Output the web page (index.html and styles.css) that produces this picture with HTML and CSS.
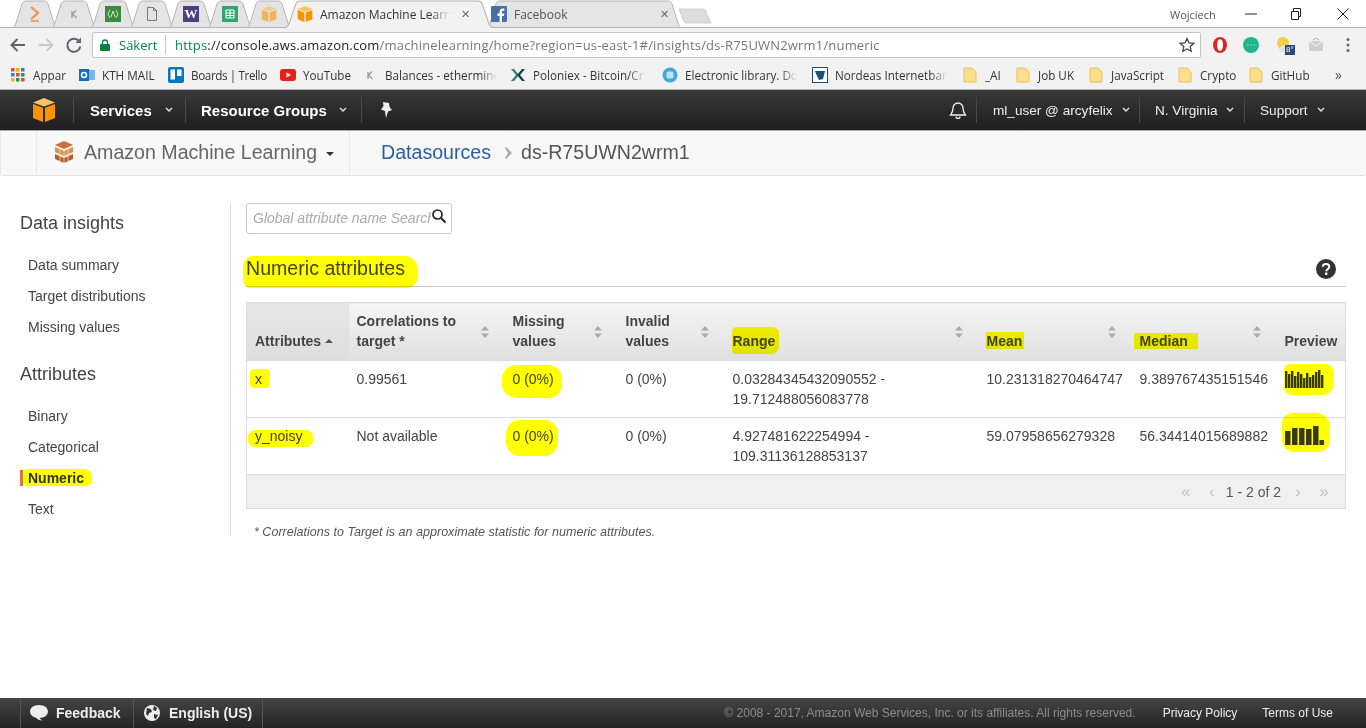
FILE: index.html
```html
<!DOCTYPE html>
<html lang="en">
<head>
<meta charset="utf-8">
<title>Amazon Machine Learning</title>
<link rel="stylesheet" href="styles.css">
</head>
<body>
<svg class="defs" width="0" height="0" aria-hidden="true">
  <symbol id="tabshape" viewBox="0 0 50 28" preserveAspectRatio="none">
    <path d="M0 28.5 C4 28 5 26 6 23 L12 4 C13 2 14 1 16 1 L34 1 C36 1 37 2 38 4 L44 23 C45 26 46 28 50 28.5Z"/>
  </symbol>
  <symbol id="wide" viewBox="0 0 200 28" preserveAspectRatio="none">
    <path d="M0 28.5 C4 28 5 26 6 23 L12 4 C13 2 14 1 16 1 L184 1 C186 1 187 2 188 4 L194 23 C195 26 196 28 200 28.5Z"/>
  </symbol>
  <symbol id="folder" viewBox="0 0 16 16"><path d="M2 1h8l4 4v10H2z" fill="#fbdf8c" stroke="#e8c25c"/></symbol>
  <symbol id="sort" viewBox="0 0 8 12"><path d="M4 0l4 4.500H0zM4 12L0 7.500h8z" fill="#aaa"/></symbol>
  <symbol id="cube" viewBox="0 0 22 24"><path d="M11 0L22 4.500 11 8.500 0 4.500z" fill="#fbc35f"/><path d="M0 6l10 3.700V24L0 20z" fill="#f79400"/><path d="M22 6L12 9.700V24l10-4z" fill="#f79400"/></symbol>
  <symbol id="chev" viewBox="0 0 8 6"><path d="M1 1l3 3 3-3" fill="none" stroke="#ddd" stroke-width="1.500"/></symbol>
</svg>

<div class="page">
  <header class="browser">
    <div class="tabstrip">
      <div class="tab pinned"><svg class="shape"><use href="#tabshape"/></svg><svg class="fav" viewBox="0 0 16 16"><path d="M4 1l7 6-7 6" fill="none" stroke="#f0914a" stroke-width="2"/><path d="M4 15h8" stroke="#f0914a" stroke-width="1.500"/></svg></div>
      <div class="tab pinned"><svg class="shape"><use href="#tabshape"/></svg><svg class="fav" viewBox="0 0 16 16"><path d="M6 5v7M6 8.500l4-4M7 8.500l3.500 3.500" fill="none" stroke="#999" stroke-width="1.300"/></svg></div>
      <div class="tab pinned"><svg class="shape"><use href="#tabshape"/></svg><svg class="fav" viewBox="0 0 16 16"><rect width="16" height="16" fill="#3c8a3e"/><path d="M5 4l-2 4 2 4M11 4l2 4-2 4M6 11l2-6 2 6" fill="none" stroke="#cfe8cf"/></svg></div>
      <div class="tab pinned"><svg class="shape"><use href="#tabshape"/></svg><svg class="fav" viewBox="0 0 16 16"><path d="M3.500 1.500h6l3 3v10h-9zM9.500 1.500v3h3" fill="none" stroke="#777"/></svg></div>
      <div class="tab pinned"><svg class="shape"><use href="#tabshape"/></svg><span class="fav w-fav">W</span></div>
      <div class="tab pinned"><svg class="shape"><use href="#tabshape"/></svg><svg class="fav" viewBox="0 0 16 16"><rect width="16" height="16" rx="1" fill="#2fa56f"/><path d="M4 4h8v8H4zM4 7h8M4 9.500h8M8 4v8" fill="none" stroke="#fff"/></svg></div>
      <div class="tab pinned"><svg class="shape"><use href="#tabshape"/></svg><svg class="fav faded"><use href="#cube"/></svg></div>
      <div class="tab active"><svg class="shape"><use href="#wide"/></svg><svg class="fav"><use href="#cube"/></svg><span class="tab-title">Amazon Machine Learning</span><span class="tab-x">✕</span></div>
      <div class="tab other"><svg class="shape"><use href="#wide"/></svg><svg class="fav" viewBox="0 0 16 16"><rect width="16" height="16" rx="1" fill="#4a6ea9"/><path d="M11 16V10h2l.3-2.400H11V6c0-.8.3-1.200 1.300-1.200h1.100V2.700C13 2.600 12.300 2.600 11.700 2.600 9.800 2.600 8.600 3.700 8.600 5.800v1.800H6.500V10h2.100v6z" fill="#fff"/></svg><span class="tab-title">Facebook</span><span class="tab-x">✕</span></div>
      <svg class="newtab" viewBox="0 0 34 16"><path d="M1 1h24a2 2 0 0 1 2 1l6 13H8a2 2 0 0 1-2-1z" fill="#dcdcdc" stroke="#cfcfcf"/></svg>
      <div class="winctl">
        <span class="win-user">Wojciech</span>
        <svg class="win-ico" viewBox="0 0 12 12"><path d="M0 6h12" stroke="#222"/></svg>
        <svg class="win-ico" viewBox="0 0 12 12"><path d="M1.500 3.500h7v8h-7zM3.500 3.500v-3h7v8h-2" fill="none" stroke="#222"/></svg>
        <svg class="win-ico" viewBox="0 0 12 12"><path d="M.5.500l11 11M11.500.500l-11 11" stroke="#222"/></svg>
      </div>
    </div>

    <div class="toolbar">
      <svg class="tb-btn" viewBox="0 0 28 28"><path d="M21 14H8M13.500 8l-6 6 6 6" fill="none" stroke="#5f6368" stroke-width="2"/></svg>
      <svg class="tb-btn" viewBox="0 0 28 28"><path d="M7 14h13M14.500 8l6 6-6 6" fill="none" stroke="#c8c8c8" stroke-width="2"/></svg>
      <svg class="tb-btn" viewBox="0 0 28 28"><path d="M19.500 11a6.500 6.500 0 1 0 .8 4.500" fill="none" stroke="#5f6368" stroke-width="2"/><path d="M21 6.500V12h-5.500z" fill="#5f6368"/></svg>
      <div class="omnibox">
        <svg class="lock" viewBox="0 0 10 12"><path d="M2.500 5V3.500a2.500 2.500 0 0 1 5 0V5" fill="none" stroke="#0b8043" stroke-width="1.300"/><rect y="5" width="10" height="7" rx="1" fill="#0b8043"/></svg>
        <span class="secure">Säkert</span>
        <span class="url"><span class="scheme">https</span><span class="host">://console.aws.amazon.com</span>/machinelearning/home?region=us-east-1#/insights/ds-R75UWN2wrm1/numeric</span>
        <svg class="star" viewBox="0 0 16 16"><path d="M8 1.500l2 4.400 4.800.5-3.600 3.200 1 4.700L8 11.900l-4.200 2.400 1-4.700L1.200 6.400 6 5.900z" fill="none" stroke="#444" stroke-width="1.300"/></svg>
      </div>
      <div class="exts">
        <svg class="ext" viewBox="0 0 18 18"><ellipse cx="9" cy="9" rx="7" ry="8" fill="#e0232a"/><ellipse cx="9" cy="9" rx="3" ry="6" fill="#fff"/></svg>
        <svg class="ext" viewBox="0 0 18 18"><circle cx="9" cy="9" r="8" fill="#20b58e"/><path d="M5.500 9h1M8.500 9h1M11.500 9h1" stroke="#fff" stroke-width="1.200"/></svg>
        <span class="ext weather"><svg viewBox="0 0 18 18"><circle cx="8" cy="7" r="6" fill="#f7cd4a"/><ellipse cx="11" cy="13" rx="7" ry="4" fill="#dfe5ec"/></svg><span class="badge">8°</span></span>
        <svg class="ext" viewBox="0 0 18 18"><path d="M2 5h14v10H2z" fill="#cfcfcf"/><path d="M2 5l7 5 7-5" fill="none" stroke="#fff"/><path d="M6 4l3-2 3 2" fill="none" stroke="#aaa"/></svg>
        <svg class="ext" viewBox="0 0 18 18"><circle cx="9" cy="3.500" r="1.500" fill="#666"/><circle cx="9" cy="9" r="1.500" fill="#666"/><circle cx="9" cy="14.500" r="1.500" fill="#666"/></svg>
      </div>
    </div>

    <nav class="bookmarks">
      <a class="bm"><svg class="bm-ico" viewBox="0 0 16 16"><g><rect x="1" y="1" width="3.500" height="3.500" fill="#e8453c"/><rect x="6" y="1" width="3.500" height="3.500" fill="#f4b400"/><rect x="11" y="1" width="3.500" height="3.500" fill="#3b78e7"/><rect x="1" y="6" width="3.500" height="3.500" fill="#3b78e7"/><rect x="6" y="6" width="3.500" height="3.500" fill="#e8453c"/><rect x="11" y="6" width="3.500" height="3.500" fill="#0f9d58"/><rect x="1" y="11" width="3.500" height="3.500" fill="#f4b400"/><rect x="6" y="11" width="3.500" height="3.500" fill="#0f9d58"/><rect x="11" y="11" width="3.500" height="3.500" fill="#e8453c"/></g></svg><span>Appar</span></a>
      <a class="bm"><svg class="bm-ico" viewBox="0 0 16 16"><rect x="6" y="3" width="10" height="10" fill="#7cb4e4"/><rect y="2" width="10" height="12" fill="#0f6fc6"/><circle cx="5" cy="8" r="2.500" fill="none" stroke="#fff" stroke-width="1.500"/></svg><span>KTH MAIL</span></a>
      <a class="bm"><svg class="bm-ico" viewBox="0 0 16 16"><rect width="16" height="16" rx="2" fill="#0079bf"/><rect x="2.500" y="2.500" width="4.500" height="10" fill="#fff"/><rect x="9" y="2.500" width="4.500" height="6.500" fill="#fff"/></svg><span class="tight">Boards | Trello</span></a>
      <a class="bm"><svg class="bm-ico" viewBox="0 0 16 16"><rect y="2" width="16" height="12" rx="3" fill="#e62117"/><path d="M6.500 5.500L11 8l-4.500 2.500z" fill="#fff"/></svg><span>YouTube</span></a>
      <a class="bm"><svg class="bm-ico" viewBox="0 0 16 16"><path d="M6 5v7M6 8.500l4-4M7 8.500l3.500 3.500" fill="none" stroke="#999" stroke-width="1.300"/></svg><span class="fade">Balances - ethermine</span></a>
      <a class="bm"><svg class="bm-ico" viewBox="0 0 16 16"><path d="M1 2l5 6-5 6h3l5-6-5-6z" fill="#2f7d7f"/><path d="M15 2l-5 6 5 6h-3L7 8l5-6z" fill="#1b3c4a"/></svg><span class="fade">Poloniex - Bitcoin/Crypto</span></a>
      <a class="bm"><svg class="bm-ico" viewBox="0 0 16 16"><circle cx="8" cy="8" r="7.500" fill="#3fa9e0"/><rect x="4.500" y="4.500" width="7" height="7" rx="2" fill="#bfe6f7"/></svg><span class="fade">Electronic library. Download</span></a>
      <a class="bm"><svg class="bm-ico" viewBox="0 0 16 16"><rect x=".5" y=".5" width="15" height="15" fill="#fff" stroke="#1d4f7c"/><path d="M3 4h10l-2 8-4 1-2-4z" fill="#1d4f7c"/></svg><span class="fade">Nordeas Internetbank</span></a>
      <a class="bm"><svg class="bm-ico"><use href="#folder"/></svg><span>_AI</span></a>
      <a class="bm"><svg class="bm-ico"><use href="#folder"/></svg><span>Job UK</span></a>
      <a class="bm"><svg class="bm-ico"><use href="#folder"/></svg><span>JavaScript</span></a>
      <a class="bm"><svg class="bm-ico"><use href="#folder"/></svg><span>Crypto</span></a>
      <a class="bm"><svg class="bm-ico"><use href="#folder"/></svg><span>GitHub</span></a>
      <a class="bm more">»</a>
    </nav>
  </header>

  <nav class="awsnav">
    <div class="nav-cell logo-cell"><svg class="aws-cube"><use href="#cube"/></svg></div>
    <div class="nav-cell services-cell"><b>Services</b><svg class="chev"><use href="#chev"/></svg></div>
    <div class="nav-cell groups-cell"><b>Resource Groups</b><svg class="chev"><use href="#chev"/></svg></div>
    <div class="nav-cell pin-cell"><svg class="pin" viewBox="0 0 12 16"><path d="M3 0l6 1 .5 4 2.500 3-4 1.500L6 16 5 9 1 7.500 3.500 4z" fill="#eee"/></svg></div>
    <div class="nav-right">
      <div class="nav-cell bell-cell"><svg class="bell" viewBox="0 0 18 18"><path d="M9 2a5 5 0 0 0-5 5c0 4-1.500 5.500-2.500 7h15C15.500 12.500 14 11 14 7a5 5 0 0 0-5-5zM7 15.500a2 2 0 0 0 4 0" fill="none" stroke="#eee" stroke-width="1.300"/></svg></div>
      <div class="nav-cell user-cell"><span>ml_user @ arcyfelix</span><svg class="chev"><use href="#chev"/></svg></div>
      <div class="nav-cell region-cell"><span>N. Virginia</span><svg class="chev"><use href="#chev"/></svg></div>
      <div class="nav-cell support-cell"><span>Support</span><svg class="chev"><use href="#chev"/></svg></div>
    </div>
  </nav>

  <div class="subnav">
    <div class="sub-gap"></div>
    <div class="sub-service">
      <svg class="ml-ico" viewBox="0 0 20 22"><path d="M10 0l9 4-9 4-9-4z" fill="#c96f3b"/><path d="M1 6l9 4 9-4v5l-9 4-9-4z" fill="#e08b4f"/><path d="M1 13l9 4 9-4v5l-9 4-9-4z" fill="#b85d2c"/><path d="M6 8v12M10 10v12M14 8v12" stroke="#f5d9bf" stroke-width=".8"/></svg>
      <span>Amazon Machine Learning</span><i class="caret"></i>
    </div>
    <div class="crumbs"><a>Datasources</a><svg class="crumb-sep" viewBox="0 0 8 12"><path d="M1 0l6 6-6 6-1-1 3-5-3-5z" fill="#aaa"/></svg><span>ds-R75UWN2wrm1</span></div>
  </div>

  <main class="main">
    <aside class="side">
      <h3>Data insights</h3>
      <ul>
        <li>Data summary</li>
        <li>Target distributions</li>
        <li>Missing values</li>
      </ul>
      <h3 class="second">Attributes</h3>
      <ul>
        <li>Binary</li>
        <li>Categorical</li>
        <li class="current"><b class="hl hl-nav">Numeric</b></li>
        <li>Text</li>
      </ul>
    </aside>

    <section class="content">
      <div class="search">
        <span class="placeholder">Global attribute name Search</span>
        <svg class="mag" viewBox="0 0 14 14"><circle cx="5.500" cy="5.500" r="4.500" fill="none" stroke="#222" stroke-width="1.700"/><path d="M9 9l4.500 4.500" stroke="#222" stroke-width="2"/></svg>
      </div>
      <div class="section-head">
        <h2><span class="hl hl-title">Numeric attributes</span></h2>
        <svg class="help" viewBox="0 0 20 20"><circle cx="10" cy="10" r="10" fill="#333"/><path d="M6.800 7.800C6.800 5.900 8.200 5 10 5c1.900 0 3.300 1 3.300 2.700 0 2.500-3 2.300-3 4.500" fill="none" stroke="#fff" stroke-width="2"/><rect x="9" y="13.500" width="2.400" height="2.400" fill="#fff"/></svg>
      </div>

      <table class="grid">
        <colgroup>
          <col class="c1"><col class="c2"><col class="c3"><col class="c4"><col class="c5"><col class="c6"><col class="c7"><col class="c8">
        </colgroup>
        <thead>
          <tr>
            <th class="sorted"><div class="th-in"><span class="th-label nowrap">Attributes <i class="up"></i></span></div></th>
            <th><div class="th-in"><span class="th-label">Correlations to target *</span><svg class="sort"><use href="#sort"/></svg></div></th>
            <th><div class="th-in"><span class="th-label">Missing values</span><svg class="sort"><use href="#sort"/></svg></div></th>
            <th><div class="th-in"><span class="th-label">Invalid values</span><svg class="sort"><use href="#sort"/></svg></div></th>
            <th><div class="th-in"><span class="th-label"><span class="hl hl-range">Range</span></span><svg class="sort"><use href="#sort"/></svg></div></th>
            <th><div class="th-in"><span class="th-label"><span class="hl hl-mean">Mean</span></span><svg class="sort"><use href="#sort"/></svg></div></th>
            <th><div class="th-in"><span class="th-label"><span class="hl hl-median">Median</span></span><svg class="sort"><use href="#sort"/></svg></div></th>
            <th><div class="th-in"><span class="th-label">Preview</span></div></th>
          </tr>
        </thead>
        <tbody>
          <tr>
            <td><span class="hl hl-x">x</span></td>
            <td>0.99561</td>
            <td><span class="hl hl-miss1">0 (0%)</span></td>
            <td>0 (0%)</td>
            <td>0.03284345432090552 - 19.712488056083778</td>
            <td>10.231318270464747</td>
            <td>9.389767435151546</td>
            <td><span class="hl hl-prev1"><svg class="spark" viewBox="0 0 39 19"><path fill="#3a3a3a" d="M0 2h2.400v17H0zM3 5h2.400v14H3zM6 2h2.400v17H6zM9 7h2.400v12H9zM12 3h2.400v16H12zM15 5h2.400v14H15zM18 9h2.400v10H18zM21 4h2.400v15H21zM24 8h2.400v11H24zM27 6h2.400v13H27zM30 3h2.400v16H30zM33 1h2.400v18H33zM36 6h2.400v13H36z"/></svg></span></td>
          </tr>
          <tr>
            <td><span class="hl hl-y">y_noisy</span></td>
            <td>Not available</td>
            <td><span class="hl hl-miss2">0 (0%)</span></td>
            <td>0 (0%)</td>
            <td>4.927481622254994 - 109.31136128853137</td>
            <td>59.07958656279328</td>
            <td>56.34414015689882</td>
            <td><span class="hl hl-prev2"><svg class="spark" viewBox="0 0 39 19"><path fill="#3a3a3a" d="M0 5h5.500v14H0zM7 2h5.500v17H7zM14 2h5.500v17H14zM21 3h5.500v16H21zM28 0h5.500v19H28zM34.500 14H39v5h-4.500z"/></svg></span></td>
          </tr>
        </tbody>
        <tfoot>
          <tr>
            <td colspan="8">
              <div class="pager"><span class="pg">«</span><span class="pg">‹</span><span class="pg-text">1 - 2 of 2</span><span class="pg">›</span><span class="pg">»</span></div>
            </td>
          </tr>
        </tfoot>
      </table>
      <p class="note">* Correlations to Target is an approximate statistic for numeric attributes.</p>
    </section>
  </main>

  <footer class="foot">
    <div class="foot-cell feedback"><svg class="foot-ico" viewBox="0 0 18 16"><path d="M9 0c5 0 9 2.800 9 6.500S14 13 9.500 13c1 1 2 2 3 2.500-2.500 0-5-1-6.500-2.800C3 12 0 9.800 0 6.500 0 2.800 4 0 9 0z" fill="#eee"/></svg><b>Feedback</b></div>
    <div class="foot-cell lang"><svg class="foot-ico" viewBox="0 0 16 16"><circle cx="8" cy="8" r="8" fill="#eee"/><path d="M3 3l4 1 1 3-3 1-1 3-2-2zM10 1l3 2-1 3-3-1zM10 9l4 1-2 4-2-1z" fill="#333"/></svg><b>English (US)</b></div>
    <div class="foot-right">
      <span class="copy">© 2008 - 2017, Amazon Web Services, Inc. or its affiliates. All rights reserved.</span>
      <a class="flink privacy">Privacy Policy</a>
      <a class="flink">Terms of Use</a>
    </div>
  </footer>
</div>
</body>
</html>
```

FILE: styles.css
```css
* { box-sizing: border-box; }
html, body { margin: 0; padding: 0; }
body { font-family: "Liberation Sans", Arial, sans-serif; font-size: 14px; color: #444; background: #fff; overflow: hidden; }
.defs { position: absolute; }
.page { width: 1366px; height: 728px; display: flex; flex-direction: column; overflow: hidden; }

/* browser chrome */
.browser { height: 90px; flex: none; font-family: "Open Sans", "Noto Sans", sans-serif; color: #333; }
.tabstrip { height: 28px; display: flex; padding-left: 10px; background: #fff; position: relative; }
.tabstrip::after { content: ""; position: absolute; left: 0; right: 0; bottom: 0; height: 1px; background: #b4b4b4; }
.tab { height: 28px; position: relative; display: flex; align-items: center; flex: none; }
.tab .shape { position: absolute; inset: 0; width: 100%; height: 100%; fill: #e4e4e4; stroke: #b4b4b4; }
.tab.pinned { width: 50px; margin-right: -11px; justify-content: center; }
.tab.active { width: 212px; margin-right: -11px; padding-left: 14px; z-index: 2; }
.tab.active .shape { fill: #f2f2f2; }
.tab.other { width: 200px; padding-left: 7px; }
.fav { width: 16px; height: 16px; position: relative; flex: none; }
.faded { opacity: .6; }
.w-fav { background: #4e4080; color: #fff; font: bold 13px/16px "Liberation Serif", serif; text-align: center; }
.tab-title { position: relative; font-size: 12px; margin-left: 7px; width: 130px; white-space: nowrap; overflow: hidden; -webkit-mask-image: linear-gradient(90deg, #000 85%, transparent); mask-image: linear-gradient(90deg, #000 85%, transparent); color: #333; }
.tab.other .tab-title { width: 137px; color: #555; }
.tab-x { position: relative; font-size: 11px; color: #666; margin-left: 11px; font-family: "DejaVu Sans", sans-serif; }
.tab.other .tab-x { margin-left: 9px; }
.newtab { width: 34px; height: 16px; margin: 8px 0 0 -6px; flex: none; position: relative; }
.winctl { margin-left: auto; display: grid; grid-template-columns: 75px 45px 47px 29px; align-items: center; height: 28px; }
.win-user { font-size: 11px; color: #555; white-space: nowrap; }
.win-ico { width: 12px; height: 12px; }

.toolbar { height: 34px; background: #f2f2f2; display: flex; align-items: center; padding-left: 4px; }
.tb-btn { width: 28px; height: 28px; flex: none; }
.omnibox { width: 1109px; height: 26px; margin-left: 4px; background: #fff; border: 1px solid #c4c4c4; border-radius: 2px; display: flex; align-items: center; padding-left: 7px; font-size: 13px; flex: none; }
.lock { width: 10px; height: 12px; flex: none; }
.secure { color: #0b8043; margin-left: 9px; padding-right: 7px; border-right: 1px solid #c8c8c8; line-height: 20px; width: 47px; white-space: nowrap; }
.url { margin-left: 9px; color: #777; white-space: nowrap; letter-spacing: .18px; flex: 1; }
.scheme { color: #0b8043; }
.host { color: #222; }
.star { width: 16px; height: 16px; margin-right: 5px; flex: none; }
.exts { display: grid; grid-template-columns: 31px 33px 32px 32px 32px; margin-left: 10px; align-items: center; }
.ext { width: 18px; height: 18px; display: block; position: relative; }
.weather svg { width: 18px; height: 18px; }
.badge { position: absolute; left: 10px; top: 9px; background: #2c4a7c; color: #fff; font: 8px/10px "Liberation Sans", sans-serif; padding: 0 1px; }

.bookmarks { height: 28px; background: #f2f2f2; border-bottom: 1px solid #b0b0b0; padding: 0 0 2px 10px; display: grid; grid-template-columns: 69px 89px 112px 82px 148px 152px 150px 150px 53px 73px 89px 71px 87px 20px; align-items: center; font-size: 11.7px; color: #333; }
.bm { display: flex; align-items: center; gap: 7px; min-width: 0; white-space: nowrap; }
.bm-ico { width: 16px; height: 16px; flex: none; }
.tight { letter-spacing: -.4px; }
.fade { width: 112px; overflow: hidden; -webkit-mask-image: linear-gradient(90deg, #000 85%, transparent); mask-image: linear-gradient(90deg, #000 85%, transparent); }
.more { font-size: 14px; color: #555; }

/* aws nav */
.awsnav { height: 41px; flex: none; display: flex; background: linear-gradient(#383838, #1f1f1f); color: #eee; border-bottom: 1px solid #aaa; font-size: 13.6px; }
.nav-cell { height: 40px; display: flex; align-items: center; position: relative; }
.nav-cell::after { content: ""; position: absolute; right: 0; top: 7px; bottom: 7px; width: 1px; background: #4a4a4a; }
.nav-cell b { font-size: 15px; color: #fff; }
.logo-cell { width: 74px; padding-left: 33px; }
.aws-cube { width: 22px; height: 24px; }
.services-cell { width: 112px; padding-left: 16px; }
.services-cell .chev { margin-left: 13px; }
.groups-cell { width: 176px; padding-left: 15px; }
.groups-cell .chev { margin-left: 12px; }
.pin-cell { padding-left: 18px; }
.pin-cell::after, .support-cell::after { display: none; }
.pin { width: 12px; height: 16px; }
.chev { width: 8px; height: 6px; margin-left: 9px; flex: none; }
.nav-right { margin-left: auto; display: flex; padding-right: 36px; }
.bell-cell { width: 37px; padding-left: 9px; }
.bell { width: 18px; height: 18px; }
.user-cell { width: 163px; padding-left: 16px; }
.region-cell { width: 105px; padding-left: 15px; }
.support-cell { width: 85px; padding-left: 15px; }

/* service bar */
.subnav { height: 45px; flex: none; display: flex; background: #f8f8f8; border-bottom: 1px solid #e4e4e4; border-radius: 3px; font-size: 19.6px; }
.sub-gap { width: 37px; border-right: 1px solid #e8e8e8; border-left: 1px solid #e8e8e8; }
.sub-service { width: 313px; display: flex; align-items: center; padding: 0 0 2px 17px; color: #666; border-right: 1px solid #e8e8e8; }
.ml-ico { width: 20px; height: 22px; margin-right: 10px; flex: none; }
.caret { width: 0; height: 0; border: 4px solid transparent; border-top-color: #333; border-bottom: 0; margin-left: 9px; margin-top: 3px; }
.crumbs { display: flex; align-items: center; padding: 0 0 2px 31px; color: #555; }
.crumbs a { color: #2b5ea7; }
.crumb-sep { width: 8px; height: 12px; margin: 2px 8px 0 14px; }

/* main */
.main { flex: 1; display: flex; align-items: flex-start; padding-top: 27px; min-height: 0; }
.side { width: 231px; height: 333px; flex: none; border-right: 1px solid #ddd; padding: 10px 0 0 20px; }
.side h3 { margin: 0 0 17px; font-size: 18px; font-weight: normal; line-height: 20px; color: #444; }
.side h3.second { margin-top: 21px; }
.side ul { list-style: none; margin: 0; padding: 0; }
.side li { height: 31px; line-height: 31px; padding-left: 8px; position: relative; }
.side li.current::before { content: ""; position: absolute; left: 0; top: 7px; width: 3px; height: 16px; background: #e8732c; }
.side li.current b { color: #333; }

.content { width: 1100px; margin-left: 15px; flex: none; }
.search { width: 206px; height: 31px; border: 1px solid #ccc; border-radius: 3px; display: flex; align-items: center; padding: 0 0 2px 6px; background: #fff; }
.placeholder { width: 178px; font-style: italic; color: #aaa; white-space: nowrap; overflow: hidden; flex: none; }
.mag { width: 14px; height: 14px; margin-left: 1px; margin-top: -3px; flex: none; }
.section-head { margin-top: 22px; height: 31px; border-bottom: 1px solid #ccc; display: flex; justify-content: space-between; padding-bottom: 6px; }
.section-head h2 { margin: 0; font-size: 19.6px; font-weight: normal; line-height: 24px; color: #444; }
.help { width: 20px; height: 20px; margin: 3px 10px 0 0; }

.grid { width: 1099px; margin-top: 15px; border-collapse: collapse; table-layout: fixed; border: 1px solid #ddd; }
.c1 { width: 102px; } .c2 { width: 156px; } .c3 { width: 113px; } .c4 { width: 107px; }
.c5 { width: 254px; } .c6 { width: 153px; } .c7 { width: 145px; } .c8 { width: 69px; }
.grid th { padding: 0; background: linear-gradient(#f5f5f5, #dfdfdf); text-align: left; font-weight: bold; vertical-align: bottom; color: #444; line-height: 20px; }
.grid th.sorted { background: linear-gradient(#e6e6e6, #dedede); }
.th-in { height: 57px; display: flex; justify-content: space-between; padding: 8px 16px 9px 8px; }
.th-label { align-self: flex-end; }
.nowrap { white-space: nowrap; }
.th-in .sort { width: 8px; height: 12px; align-self: center; margin-top: 2px; flex: none; }
.up { display: inline-block; width: 0; height: 0; border: 4px solid transparent; border-bottom-color: #555; border-top: 0; vertical-align: 3px; }
.grid td { padding: 8px; line-height: 20px; height: 57px; vertical-align: top; border-top: 1px solid #ddd; color: #444; }
.grid tfoot td { background: #f0f0f0; padding: 0; height: 34px; vertical-align: middle; }
.pager { display: flex; justify-content: flex-end; align-items: center; padding-right: 8px; }
.pg { color: #c4c4c4; font-size: 17px; width: 26px; text-align: center; line-height: 20px; }
.pg-text { margin: 0 4px 0 1px; color: #555; }
.note { margin: 15px 0 0 8px; font-size: 12.55px; line-height: 16px; font-style: italic; color: #555; }

/* marker highlights drawn by hand over the screenshot */
.hl { position: relative; display: inline-block; }
.hl::before { content: ""; position: absolute; background: #ffff00; mix-blend-mode: multiply; }
.hl-title::before { inset: 0 -13px -8px -3px; border-radius: 10px 14px 12px 8px; }
.hl-nav::before { inset: 6px -8px 8px -4px; border-radius: 3px 8px 6px 4px; }
.hl-range::before { inset: -4px -4px -3px -1px; border-radius: 5px 6px 8px 4px; }
.hl-mean::before { inset: 1px -2px 2px -1px; }
.hl-median::before { inset: 2px -10px 2px -6px; }
.hl-x::before { inset: 0 -8px 1px -5px; border-radius: 4px; }
.hl-y::before { inset: 4px -11px -1px -7px; border-radius: 7px; }
.hl-miss1::before { inset: -4px -8px -9px -11px; border-radius: 14px; }
.hl-miss2::before { inset: -6px -4px -10px -7px; border-radius: 14px; }
.hl-prev1::before { inset: -5px -10px -7px -1px; border-radius: 6px 9px 12px 8px; }
.hl-prev2::before { inset: -13px -6px -7px -3px; border-radius: 10px 14px 12px 12px; }
.spark { display: block; width: 39px; height: 19px; }

/* footer */
.foot { height: 30px; flex: none; display: flex; background: linear-gradient(#454545, #232323); color: #eee; padding-left: 20px; align-items: stretch; }
.foot-cell { display: flex; align-items: center; border-left: 1px solid #555; }
.feedback { width: 113px; padding-left: 9px; }
.lang { width: 130px; padding-left: 9px; border-right: 1px solid #555; }
.foot-ico { width: 18px; height: 16px; margin-right: 8px; flex: none; }
.foot-right { margin-left: auto; display: flex; align-items: center; font-size: 12px; padding-right: 33px; }
.copy { color: #8c8c8c; margin-right: 27px; }
.flink { color: #eee; }
.privacy { margin-right: 25px; }
```
